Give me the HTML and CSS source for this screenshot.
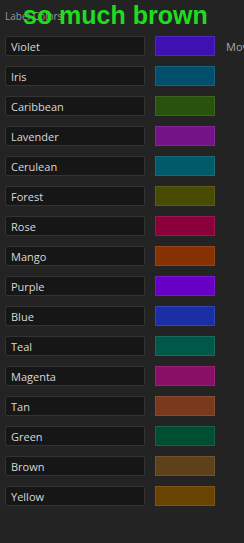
FILE: index.html
```html
<!DOCTYPE html>
<html lang="en">
<head>
  <meta charset="UTF-8">
  <title>Label Colors</title>
  <link rel="stylesheet" href="styles.css">
</head>
<body>

<div class="panel">
  <div class="panel-title">Label Colors</div>
  <div class="banner">so much brown</div>

  <div class="label-list">
    <div class="label-row">
      <input class="label-name" type="text" value="Violet">
      <div class="swatch" style="background-color: #3f10b2;"></div>
      <span class="side-text">Mov</span>
    </div>
    <div class="label-row">
      <input class="label-name" type="text" value="Iris">
      <div class="swatch" style="background-color: #00506d;"></div>
    </div>
    <div class="label-row">
      <input class="label-name" type="text" value="Caribbean">
      <div class="swatch" style="background-color: #29520c;"></div>
    </div>
    <div class="label-row">
      <input class="label-name" type="text" value="Lavender">
      <div class="swatch" style="background-color: #741287;"></div>
    </div>
    <div class="label-row">
      <input class="label-name" type="text" value="Cerulean">
      <div class="swatch" style="background-color: #005a69;"></div>
    </div>
    <div class="label-row">
      <input class="label-name" type="text" value="Forest">
      <div class="swatch" style="background-color: #4a4b02;"></div>
    </div>
    <div class="label-row">
      <input class="label-name" type="text" value="Rose">
      <div class="swatch" style="background-color: #8b003a;"></div>
    </div>
    <div class="label-row">
      <input class="label-name" type="text" value="Mango">
      <div class="swatch" style="background-color: #863102;"></div>
    </div>
    <div class="label-row">
      <input class="label-name" type="text" value="Purple">
      <div class="swatch" style="background-color: #6700c4;"></div>
    </div>
    <div class="label-row">
      <input class="label-name" type="text" value="Blue">
      <div class="swatch" style="background-color: #1a2fa6;"></div>
    </div>
    <div class="label-row">
      <input class="label-name" type="text" value="Teal">
      <div class="swatch" style="background-color: #005848;"></div>
    </div>
    <div class="label-row">
      <input class="label-name" type="text" value="Magenta">
      <div class="swatch" style="background-color: #890e66;"></div>
    </div>
    <div class="label-row">
      <input class="label-name" type="text" value="Tan">
      <div class="swatch" style="background-color: #783a1b;"></div>
    </div>
    <div class="label-row">
      <input class="label-name" type="text" value="Green">
      <div class="swatch" style="background-color: #004f32;"></div>
    </div>
    <div class="label-row">
      <input class="label-name" type="text" value="Brown">
      <div class="swatch" style="background-color: #5d4219;"></div>
    </div>
    <div class="label-row">
      <input class="label-name" type="text" value="Yellow">
      <div class="swatch" style="background-color: #6b4300;"></div>
    </div>
  </div>
</div>

</body>
</html>
```

FILE: styles.css
```css
body {
  margin: 0;
  background-color: #232323;
  font-family: 'Open Sans', 'Noto Sans', sans-serif;
  color: #ddd;
}

.panel {
  position: relative;
  height: 543px;
  padding: 0 5px;
  overflow: hidden;
}

.panel-title {
  height: 36px;
  line-height: 32px;
  font-size: 10px;
  color: #9a9a9a;
}

.banner {
  position: absolute;
  top: 1px;
  left: 23px;
  font-family: 'Liberation Sans', Arial, sans-serif;
  font-weight: bold;
  font-size: 25px;
  color: #1fdc1f;
  white-space: nowrap;
}

.label-list {
  display: flex;
  flex-direction: column;
  gap: 10px;
}

.label-row {
  display: flex;
  align-items: center;
  height: 20px;
}

.label-name {
  box-sizing: border-box;
  flex-shrink: 0;
  width: 140px;
  height: 20px;
  margin: 0;
  padding: 0 0 0 5px;
  background-color: #161616;
  border: 1px solid #333;
  border-radius: 2px;
  font-family: 'Open Sans', 'Noto Sans', sans-serif;
  font-size: 11px;
  color: #d8d8d8;
  outline: none;
}

.swatch {
  box-sizing: border-box;
  flex-shrink: 0;
  width: 60px;
  height: 20px;
  margin-left: 10px;
  border: 1px solid rgba(255, 255, 255, 0.1);
}

.side-text {
  flex-shrink: 0;
  margin-left: 11px;
  font-size: 11px;
  color: #a8a8a8;
  white-space: nowrap;
}
```
